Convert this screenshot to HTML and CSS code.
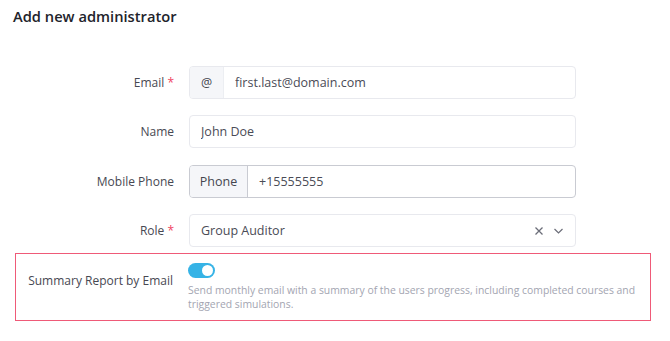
FILE: index.html
```html
<!DOCTYPE html>
<html lang="en">
<head>
    <meta charset="UTF-8">
    <meta name="viewport" content="width=device-width, initial-scale=1.0">
    <title>Add new administrator</title>
    <link rel="stylesheet" href="styles.css">
</head>
<body>
    <h2 class="title">Add new administrator</h2>

    <form class="admin-form">
        <div class="row">
            <label class="label">Email <span class="req">*</span></label>
            <div class="field">
                <span class="addon addon-at">@</span>
                <input class="input" type="text" value="first.last@domain.com">
            </div>
        </div>
        <div class="row">
            <label class="label">Name</label>
            <div class="field">
                <input class="input" type="text" value="John Doe">
            </div>
        </div>
        <div class="row row-phone">
            <label class="label">Mobile Phone</label>
            <div class="field field-focus">
                <span class="addon addon-phone">Phone</span>
                <input class="input" type="text" value="+15555555">
            </div>
        </div>
        <div class="row">
            <label class="label">Role <span class="req">*</span></label>
            <div class="field select">
                <span class="select-value">Group Auditor</span>
                <span class="select-icons">
                    <svg width="10" height="10" viewBox="0 0 10 10"><path d="M1.5 1.5 L8.5 8.5 M8.5 1.5 L1.5 8.5" stroke="#6b6d78" stroke-width="1.3" fill="none"/></svg>
                    <svg width="11" height="8" viewBox="0 0 11 8"><path d="M1.5 2 L5.5 6 L9.5 2" stroke="#6b6d78" stroke-width="1.2" fill="none"/></svg>
                </span>
            </div>
        </div>

        <div class="row summary">
            <label class="label summary-label">Summary Report by Email</label>
            <div class="summary-body">
                <span class="toggle"><span class="knob"></span></span>
                <p class="hint">Send monthly email with a summary of the users progress, including completed courses and triggered simulations.</p>
            </div>
        </div>
    </form>
</body>
</html>
```

FILE: styles.css
```css
body {
    margin: 0;
    padding: 0;
    background-color: #fff;
    font-family: "Open Sans", "Liberation Sans", sans-serif;
    color: #3d3e48;
}
.title {
    margin: 0;
    padding: 6px 13px 0;
    font-size: 14.7px;
    font-weight: 600;
    line-height: 20px;
    color: #22232b;
}
.admin-form {
    padding: 40px 0 0 15px;
}
.row {
    display: grid;
    grid-template-columns: 159px 387px;
    column-gap: 15px;
    align-items: center;
    margin-bottom: 16px;
}
.row-phone {
    margin-top: 17px;
}
.label {
    text-align: right;
    font-size: 12px;
    color: #474852;
}
.req {
    color: #f0435f;
}
.field {
    display: flex;
    height: 33px;
    border: 1px solid #e8e9ee;
    border-radius: 4px;
    box-sizing: border-box;
    overflow: hidden;
}
.field-focus {
    border-color: #c9cbd2;
}
.addon {
    display: flex;
    align-items: center;
    justify-content: center;
    background-color: #f5f6f9;
    border-right: 1px solid #eceef2;
    font-size: 12.5px;
    color: #45464f;
}
.addon-at {
    width: 33px;
}
.addon-phone {
    width: 57px;
    border-right-color: #c9cbd2;
}
.input {
    flex: 1;
    border: none;
    outline: none;
    padding: 0 11px;
    font-family: inherit;
    font-size: 12.5px;
    color: #4a4b56;
    background: transparent;
}
.select {
    align-items: center;
    justify-content: space-between;
    padding: 0 11px;
}
.select-value {
    font-size: 12.5px;
    color: #4a4b56;
}
.select-icons {
    display: flex;
    align-items: center;
    gap: 9px;
}
.summary {
    grid-template-columns: 157px 1fr;
    width: 636px;
    height: 68px;
    box-sizing: border-box;
    border: 1.5px solid #ef5a78;
    margin-top: -10px;
    align-items: start;
}
.summary-label {
    padding-top: 18px;
}
.summary-body {
    padding-top: 9px;
}
.toggle {
    display: block;
    position: relative;
    width: 27px;
    height: 15px;
    border-radius: 8px;
    background-color: #36b3e6;
}
.knob {
    position: absolute;
    right: 2px;
    top: 2px;
    width: 11px;
    height: 11px;
    border-radius: 50%;
    background-color: #fff;
}
.hint {
    margin: 5px 0 0;
    font-size: 10.4px;
    line-height: 14px;
    color: #a3a5b1;
}
```
